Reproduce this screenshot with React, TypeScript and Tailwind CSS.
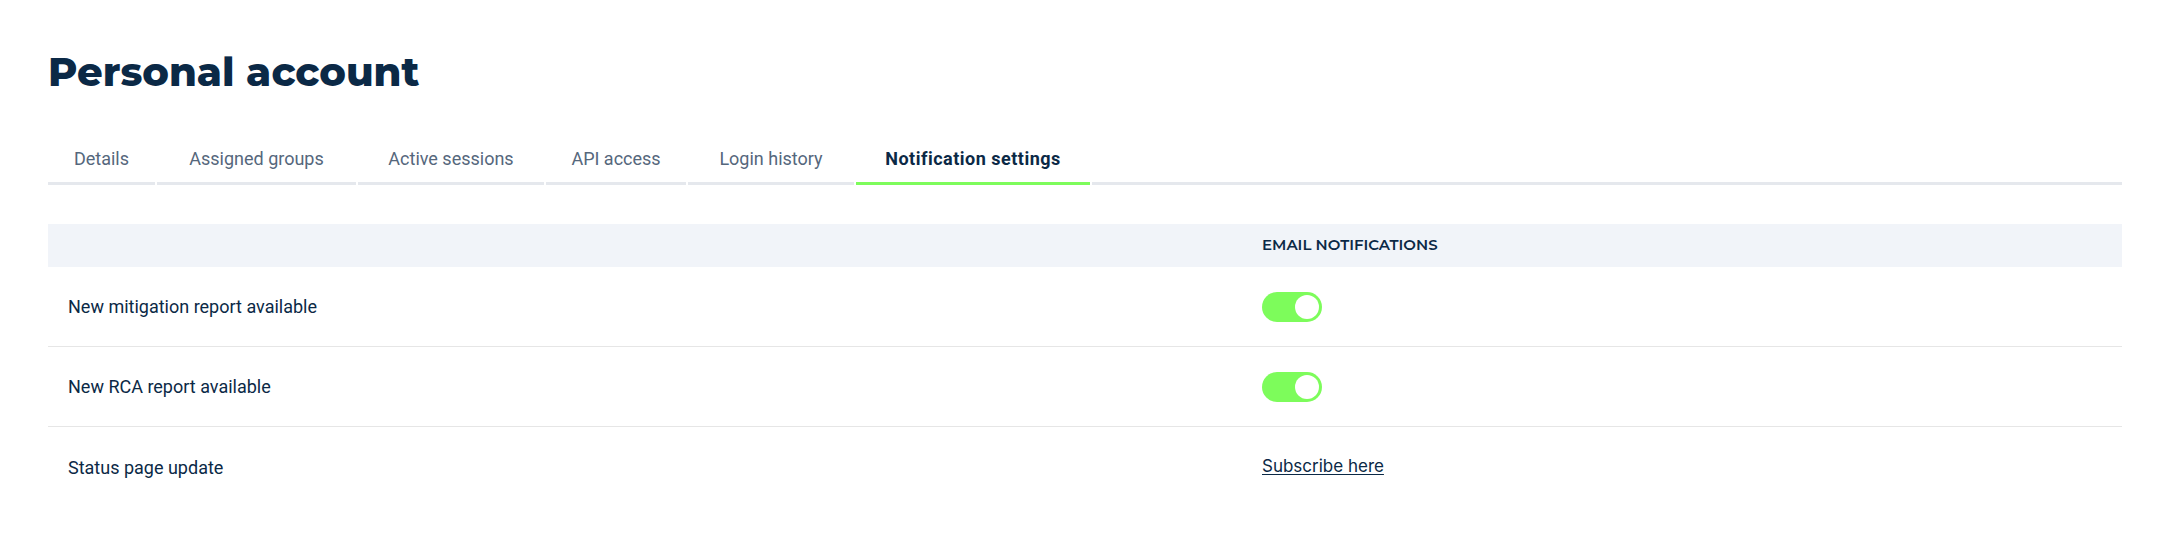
import { useState } from "react";

type Tab = { label: string; width: string; active?: boolean };

const tabs: Tab[] = [
  { label: "Details", width: "w-[107px]" },
  { label: "Assigned groups", width: "w-[199px]" },
  { label: "Active sessions", width: "w-[186px]" },
  { label: "API access", width: "w-[140px]" },
  { label: "Login history", width: "w-[166px]" },
  { label: "Notification settings", width: "w-[234px]", active: true },
];

type Setting = { id: string; label: string; kind: "toggle" | "link" };

const settings: Setting[] = [
  { id: "mitigation", label: "New mitigation report available", kind: "toggle" },
  { id: "rca", label: "New RCA report available", kind: "toggle" },
  { id: "status", label: "Status page update", kind: "link" },
];

const Toggle = ({ on, onChange }: { on: boolean; onChange: () => void }) => (
  <button
    type="button"
    role="switch"
    aria-checked={on}
    onClick={onChange}
    className={`flex h-[30px] w-[60px] items-center rounded-full p-[3px] ${
      on ? "justify-end bg-[#7dfc5b]" : "justify-start bg-[#d5dae1]"
    }`}
  >
    <span className="block h-[24px] w-[24px] rounded-full bg-white" />
  </button>
);

export default function App() {
  const [enabled, setEnabled] = useState<Record<string, boolean>>({
    mitigation: true,
    rca: true,
  });

  return (
    <div className="min-h-screen bg-white px-[48px] pt-[46px] font-['Roboto',sans-serif] text-[#0b2946]">
      <h1 className="font-['Montserrat','Inter',sans-serif] text-[40px] font-extrabold leading-[52px]">
        Personal account
      </h1>

      <div className="mt-[49px] flex gap-[2px]">
        {tabs.map(({ label, width, active }) => (
          <div
            key={label}
            className={`${width} shrink-0 border-b-[3px] pb-[11px] text-center text-[18px] leading-[24px] ${
              active
                ? "border-[#7dfc5b] font-bold tracking-[0.5px] text-[#0b2946]"
                : "border-[#e5e8ed] text-[#55677c]"
            }`}
          >
            {label}
          </div>
        ))}
        <div className="flex-1 border-b-[3px] border-[#e5e8ed]" />
      </div>

      <div className="mt-[39px]">
        <div className="grid h-[43px] grid-cols-[1214px_1fr] items-center bg-[#f1f4f9]">
          <div />
          <div className="font-['Montserrat','Inter',sans-serif] text-[15px] font-semibold uppercase">
            Email notifications
          </div>
        </div>

        {settings.map((s, i) => (
          <div
            key={s.id}
            className={`grid h-[80px] grid-cols-[1214px_1fr] items-center ${
              i < settings.length - 1 ? "border-b border-[#e6e6e6]" : ""
            }`}
          >
            <div className="pl-[20px] text-[18px]">{s.label}</div>
            <div>
              {s.kind === "toggle" ? (
                <Toggle
                  on={!!enabled[s.id]}
                  onChange={() => setEnabled((p) => ({ ...p, [s.id]: !p[s.id] }))}
                />
              ) : (
                <a href="#" className="font-['Inter',sans-serif] text-[17px] underline underline-offset-2">
                  Subscribe here
                </a>
              )}
            </div>
          </div>
        ))}
      </div>
    </div>
  );
}
